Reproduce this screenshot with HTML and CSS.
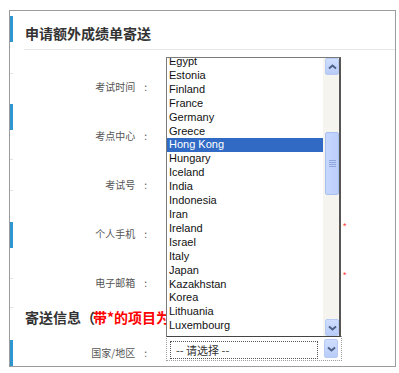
FILE: index.html
```html
<!DOCTYPE html>
<html lang="zh-CN">

<head>
  <meta charset="UTF-8">
  <meta name="viewport" content="width=device-width, initial-scale=1.0">
  <title>申请额外成绩单寄送</title>
  <link rel="stylesheet" href="styles.css">
</head>

<body>
  <div id="frame">

    <!-- 左边的蓝色小条 -->
    <div class="edge">
      <i class="bar m5"></i>
      <i class="tick m31"></i>
      <i class="bar m30"></i>
      <i class="tick m29"></i>
      <i class="tick m30"></i>
      <i class="bar m31"></i>
      <i class="tick m30"></i>
      <i class="tick m28"></i>
      <i class="bar m32"></i>
    </div>

    <div class="main">
      <h2 class="title">申请额外成绩单寄送</h2>

      <div class="form">
        <div class="row">
          <label>考试时间<span class="colon">:</span></label>
          <input type="text">
        </div>
        <div class="row">
          <label>考点中心<span class="colon">:</span></label>
          <input type="text">
        </div>
        <div class="row">
          <label>考试号<span class="colon">:</span></label>
          <input type="text">
        </div>
        <div class="row">
          <label>个人手机<span class="colon">:</span></label>
          <input type="text">
          <span class="req">*</span>
        </div>
        <div class="row">
          <label>电子邮箱<span class="colon">:</span></label>
          <input type="text">
          <span class="req">*</span>
        </div>
      </div>

      <h3 class="section">寄送信息（<span class="red">带*的项目为必填项）</span></h3>

      <div class="row last">
        <label>国家/地区<span class="colon">:</span></label>
        <div class="select">
          <div class="value">-- 请选择 --</div>
          <div class="sbtn">
            <svg width="9" height="6" viewBox="0 0 9 6"><path d="M1 1.5 L4.5 4.5 L8 1.5" fill="none" stroke="#4d6185" stroke-width="2"/></svg>
          </div>
        </div>
      </div>
    </div>

    <!-- 展开的下拉列表，盖在表单上面 -->
    <div class="popup">
      <ul>
        <li>Egypt</li>
        <li>Estonia</li>
        <li>Finland</li>
        <li>France</li>
        <li>Germany</li>
        <li>Greece</li>
        <li class="on">Hong Kong</li>
        <li>Hungary</li>
        <li>Iceland</li>
        <li>India</li>
        <li>Indonesia</li>
        <li>Iran</li>
        <li>Ireland</li>
        <li>Israel</li>
        <li>Italy</li>
        <li>Japan</li>
        <li>Kazakhstan</li>
        <li>Korea</li>
        <li>Lithuania</li>
        <li>Luxembourg</li>
      </ul>
      <div class="scroll">
        <div class="sbtn">
          <svg width="9" height="6" viewBox="0 0 9 6"><path d="M1 4.5 L4.5 1.5 L8 4.5" fill="none" stroke="#4d6185" stroke-width="2"/></svg>
        </div>
        <div class="thumb">
          <svg width="7" height="7" viewBox="0 0 7 7"><path d="M0 0.5 H7 M0 2.5 H7 M0 4.5 H7 M0 6.5 H7" stroke="#8fa6d8" stroke-width="1"/></svg>
        </div>
        <div class="track"></div>
        <div class="sbtn">
          <svg width="9" height="6" viewBox="0 0 9 6"><path d="M1 1.5 L4.5 4.5 L8 1.5" fill="none" stroke="#4d6185" stroke-width="2"/></svg>
        </div>
      </div>
    </div>

  </div>
</body>

</html>
```

FILE: styles.css
```css
body {
  margin: 0;
  background: #fff;
  font: 11px "Liberation Sans", "Noto Sans CJK SC", sans-serif;
  color: #333;
}

#frame {
  position: relative;
  display: flex;
  width: 385px;
  height: 355px;
  margin: 10px 0 0 9px;
  border: 1px solid #9c9c9c;
  overflow: hidden;
}

.edge {
  display: flex;
  flex: none;
  flex-direction: column;
  width: 3px;
}

.edge .bar {
  display: block;
  height: 29px;
  background: #2f96d0;
}

.edge .tick {
  display: block;
  height: 1px;
  background: #e4e4e4;
}

.m5 { margin-top: 5px; }
.m28 { margin-top: 28px; }
.m29 { margin-top: 29px; }
.m30 { margin-top: 30px; }
.m31 { margin-top: 31px; }
.m32 { margin-top: 32px; }

.main {
  flex: 1;
  padding-left: 11px;
}

.title {
  margin: 0;
  padding: 12px 0 6px 1px;
  font: bold 14px/20px "Noto Sans CJK SC", sans-serif;
  color: #333;
  border-bottom: 1px solid #e6e6e6;
}

.form {
  padding-top: 12px;
}

.row {
  display: grid;
  grid-template-columns: 142px 175px auto;
  align-items: center;
  height: 49px;
}

.row label {
  padding-right: 19px;
  text-align: right;
  font: 10px "Noto Sans CJK SC", sans-serif;
  color: #555;
}

.colon {
  margin-left: 9px;
}

.row input {
  height: 18px;
  box-sizing: border-box;
  border: 1px solid #ccc;
}

.req {
  align-self: start;
  padding: 13px 0 0 2px;
  font: 9px/9px "Liberation Sans", sans-serif;
  color: #f33;
}

/* 右边被下拉列表盖住，所以截掉 */
.section {
  width: 141px;
  margin: 0;
  height: 20px;
  padding-left: 1px;
  overflow: hidden;
  font: bold 14px/20px "Noto Sans CJK SC", sans-serif;
  color: #333;
  white-space: nowrap;
}

.section .red {
  margin-left: -2px;
  color: #f00;
}

.row.last {
  height: 50px;
}

.select {
  display: flex;
  gap: 6px;
  align-self: start;
  width: 176px;
  height: 25px;
  margin-top: 9px;
  padding: 4px 3px 1px 3px;
  box-sizing: border-box;
  border: 1px dotted #a0a0a0;
}

.select .value {
  flex: 1;
  padding-left: 5px;
  border: 1px dotted #555;
  font: 11px/16px "Noto Sans CJK SC", sans-serif;
  color: #333;
}

.sbtn {
  display: flex;
  flex: none;
  align-items: center;
  justify-content: center;
  width: 14px;
  height: 17px;
  box-sizing: border-box;
  border: 1px solid #b7caf4;
  border-radius: 2px;
  background: linear-gradient(#cfdeff, #b8ccf8);
}

.select .sbtn {
  height: 19px;
  margin-top: -2px;
}

/* 下拉列表 */
.popup {
  position: absolute;
  left: 156px;
  top: 46px;
  display: flex;
  width: 175px;
  height: 280px;
  box-sizing: border-box;
  border: 1px solid #7a7a7a;
  border-right: 2px solid #555;
  border-bottom-color: #444;
  background: #fff;
  overflow: hidden;
}

.popup ul {
  flex: 1;
  margin: -3px 0 0;
  padding: 0;
  list-style: none;
  font: 11px/13.9px "Liberation Sans", Arial, sans-serif;
  color: #111;
}

.popup li {
  padding-left: 2px;
  white-space: nowrap;
}

.popup li.on {
  background: #316ac5;
  color: #fff;
}

.scroll {
  display: flex;
  flex: none;
  flex-direction: column;
  width: 16px;
  padding-left: 2px;
  box-sizing: border-box;
  background: #f5f4ef;
}

.thumb {
  display: flex;
  align-items: center;
  justify-content: center;
  height: 63px;
  margin-top: 57px;
  box-sizing: border-box;
  border: 1px solid #a9bff0;
  border-radius: 2px;
  background: linear-gradient(90deg, #c6d7ff, #bccffa);
}

.track {
  flex: 1;
}
```
